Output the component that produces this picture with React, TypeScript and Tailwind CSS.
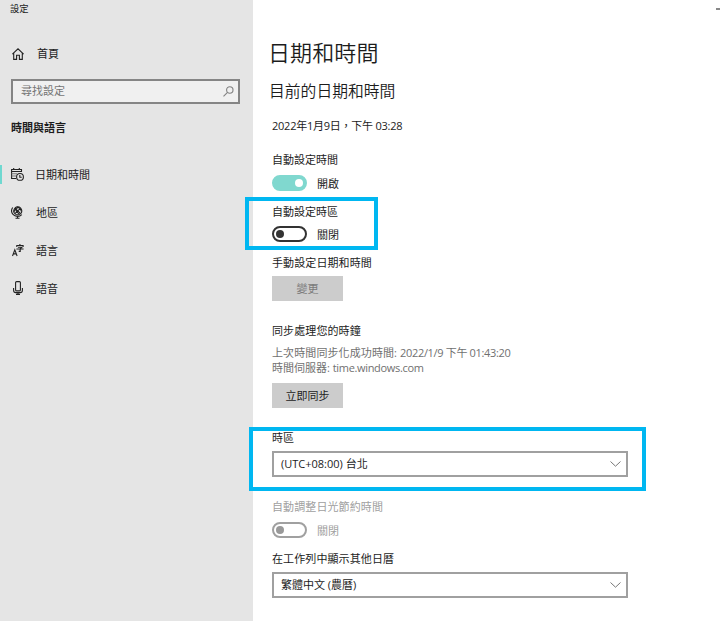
import type { ReactNode } from 'react';

function HomeIcon() {
  return (
    <svg width="12" height="12" viewBox="0 0 12 12" fill="none" stroke="#222" strokeWidth="1.1">
      <path d="M.4 6.100 6 .8l5.600 5.300M1.700 5.100v6.300h2.900V7.300h2.800v4.100h2.900V5.100" />
    </svg>
  );
}

function SearchIcon() {
  return (
    <svg width="11" height="11" viewBox="0 0 11 11" fill="none" stroke="#808080" strokeWidth="1.1">
      <circle cx="6.800" cy="4" r="3.200" />
      <path d="M4.500 6.300.5 10.300" />
    </svg>
  );
}

function CalendarClockIcon() {
  return (
    <svg width="13" height="13" viewBox="0 0 13 13" fill="none" stroke="#222" strokeWidth="1.1">
      <path d="M5 10.500H.6v-9h9.900V4M.6 3.500h9.900M2.700 0v1.500M8.300 0v1.500" />
      <path d="M.6 5.800h5.400M.6 8h4.400" stroke="#777" />
      <circle cx="9" cy="8.900" r="3.400" />
      <path d="M8.800 6.900v2.300h1.900" />
    </svg>
  );
}

function GlobeIcon() {
  return (
    <svg width="13" height="13" viewBox="0 0 13 13" fill="none" stroke="#222" strokeWidth="1.1">
      <circle cx="6.800" cy="4.900" r="4" />
      <path d="M3.900 2.100 9.700 7.700M9.700 2.100 3.900 7.700M4.800 1.500c-.8 2.200.8 5.200 3.600 6.500M8.200 1.500C5.500 2 3 4 2.800 6.300M6 1c2.300.5 4 2.500 4.300 4.500" />
      <path d="M1.700 1.500C.3 3.600.4 6.600 2 8.400c2.300 2.500 6.400 2.600 8.800.2M6.500 10.200v2M4.500 12.300h4" />
    </svg>
  );
}

function LanguageIcon() {
  return (
    <svg width="12" height="13" viewBox="0 0 12 13" fill="none" stroke="#222" strokeWidth="1.1">
      <path d="M.5 12 2.800 5.800 5.100 12M1.300 9.900h3" />
      <path d="M7.900 0v1.500M4.800 3V1.500h6.300V3M5.900 3.300h3.900L8.200 4.700v2.700H6.700M4.400 5h7.200" />
    </svg>
  );
}

function MicIcon() {
  return (
    <svg width="10" height="14" viewBox="0 0 10 14" fill="none" stroke="#222" strokeWidth="1.1">
      <rect x="2.600" y=".6" width="4.800" height="9.300" rx="1" />
      <path d="M.6 7v2.200c0 1.500 1 2.400 2.300 2.400h4.200c1.300 0 2.300-.9 2.300-2.400V7M5 11.600v1.900M3 13.400h4" />
    </svg>
  );
}

function NavItem({ icon, label, active = false }: { icon: ReactNode; label: string; active?: boolean }) {
  return (
    <div className="flex h-[38px] items-center">
      <span className={`mb-[2px] h-[19px] w-[2px] ${active ? 'bg-[#6fd8d0]' : ''}`} />
      <span className="mb-[2px] ml-[8px] flex w-[15px] justify-center">{icon}</span>
      <span className={active ? 'ml-[10px]' : 'ml-[11px]'}>{label}</span>
    </div>
  );
}

function Toggle({ state, label }: { state: 'on' | 'off' | 'disabled'; label: string }) {
  const track = {
    on: 'justify-end border-[#80d8cf] bg-[#80d8cf]',
    off: 'justify-start border-[#333] bg-white',
    disabled: 'justify-start border-[#a0a0a0] bg-white',
  }[state];
  const knob = { on: 'bg-white', off: 'bg-[#333]', disabled: 'bg-[#999]' }[state];
  return (
    <div className={`flex h-4 items-center gap-[10px] ${state === 'disabled' ? 'text-[#a0a0a0]' : ''}`}>
      <span className={`flex h-4 w-[35px] items-center rounded-full border-2 px-[2px] ${track}`}>
        <span className={`size-2 rounded-full ${knob}`} />
      </span>
      <span className="pt-[2px]">{label}</span>
    </div>
  );
}

function Select({ children }: { children: ReactNode }) {
  return (
    <div className="flex h-[26px] w-[356px] items-center justify-between border-2 border-[#a0a0a0] bg-white pr-[5px] pl-[7px]">
      <span>{children}</span>
      <svg width="11" height="6" viewBox="0 0 11 6" fill="none" stroke="#777" strokeWidth="1">
        <path d="m.5.5 5 4.700 5-4.700" />
      </svg>
    </div>
  );
}

export default function App() {
  return (
    <div className="relative flex h-[621px] w-[720px] overflow-hidden bg-white font-['Open_Sans','Noto_Sans_CJK_TC',sans-serif] text-[11px] leading-4 whitespace-nowrap text-[#1c1c1c]">
      <aside className="flex w-[253px] shrink-0 flex-col bg-[#e5e5e5]">
        <div className="mt-[1px] pl-[10px] text-[9.300px]">設定</div>
        <div className="mt-[29px] flex h-4 items-center pl-[12px]">
          <HomeIcon />
          <span className="ml-[13px]">首頁</span>
        </div>
        <div className="mt-[17px] ml-[11px] flex h-[25px] w-[229px] items-center justify-between border-2 border-[#858585] bg-[#f0f0f0] pr-[4px] pl-[8px] text-[#757575]">
          <span className="-mt-px">尋找設定</span>
          <SearchIcon />
        </div>
        <div className="mt-[16px] pl-[11px] font-bold">時間與語言</div>
        <nav className="mt-[20px]">
          <NavItem active icon={<CalendarClockIcon />} label="日期和時間" />
          <NavItem icon={<GlobeIcon />} label="地區" />
          <NavItem icon={<LanguageIcon />} label="語言" />
          <NavItem icon={<MicIcon />} label="語音" />
        </nav>
      </aside>

      <main className="flex flex-col items-start pl-[19px]">
        <h1 className="mt-[36px] -ml-[4px] text-[22px] leading-8 font-[350] tracking-[0.1px]">日期和時間</h1>
        <h2 className="mt-[11px] -ml-[3px] text-[15.800px] leading-6 font-[350]">目前的日期和時間</h2>
        <p className="mt-[15px] tracking-[-0.24px]">2022年1月9日，下午 03:28</p>
        <p className="mt-[18px] mb-[7px]">自動設定時間</p>
        <Toggle state="on" label="開啟" />
        <p className="mt-[13px] mb-[6px]">自動設定時區</p>
        <Toggle state="off" label="關閉" />
        <p className="mt-[13px] tracking-[0.1px]">手動設定日期和時間</p>
        <button className="mt-[5px] h-[25px] w-[71px] bg-[#ccc] text-[#7a7a7a]">變更</button>
        <p className="mt-[22px] tracking-[0.1px]">同步處理您的時鐘</p>
        <div className="mt-[6px] leading-[15px] text-[#707070]">
          <p>
            <span className="tracking-[0.1px]">上次時間同步化成功時間: </span>
            <span className="tracking-[-0.330px]">2022/1/9 下午 01:43:20</span>
          </p>
          <p>
            時間伺服器: <span className="tracking-[-0.330px]">time.windows.com</span>
          </p>
        </div>
        <button className="mt-[8px] h-[25px] w-[71px] bg-[#ccc]">立即同步</button>
        <p className="mt-[22px] mb-[5px]">時區</p>
        <Select>(UTC+08:00) 台北</Select>
        <p className="mt-[22px] mb-[7px] tracking-[0.1px] text-[#a0a0a0]">自動調整日光節約時間</p>
        <Toggle state="disabled" label="關閉" />
        <p className="mt-[13px] mb-[5px] tracking-[0.1px]">在工作列中顯示其他日曆</p>
        <Select>繁體中文 (農曆)</Select>
      </main>

      <div className="absolute top-[8px] right-0 h-[2px] w-1 bg-[#888]" />
      <div className="absolute top-[197px] left-[245px] h-[53px] w-[133px] border-4 border-[#00b7f1]" />
      <div className="absolute top-[427px] left-[249px] h-[64px] w-[397px] border-4 border-[#00b7f1]" />
    </div>
  );
}
